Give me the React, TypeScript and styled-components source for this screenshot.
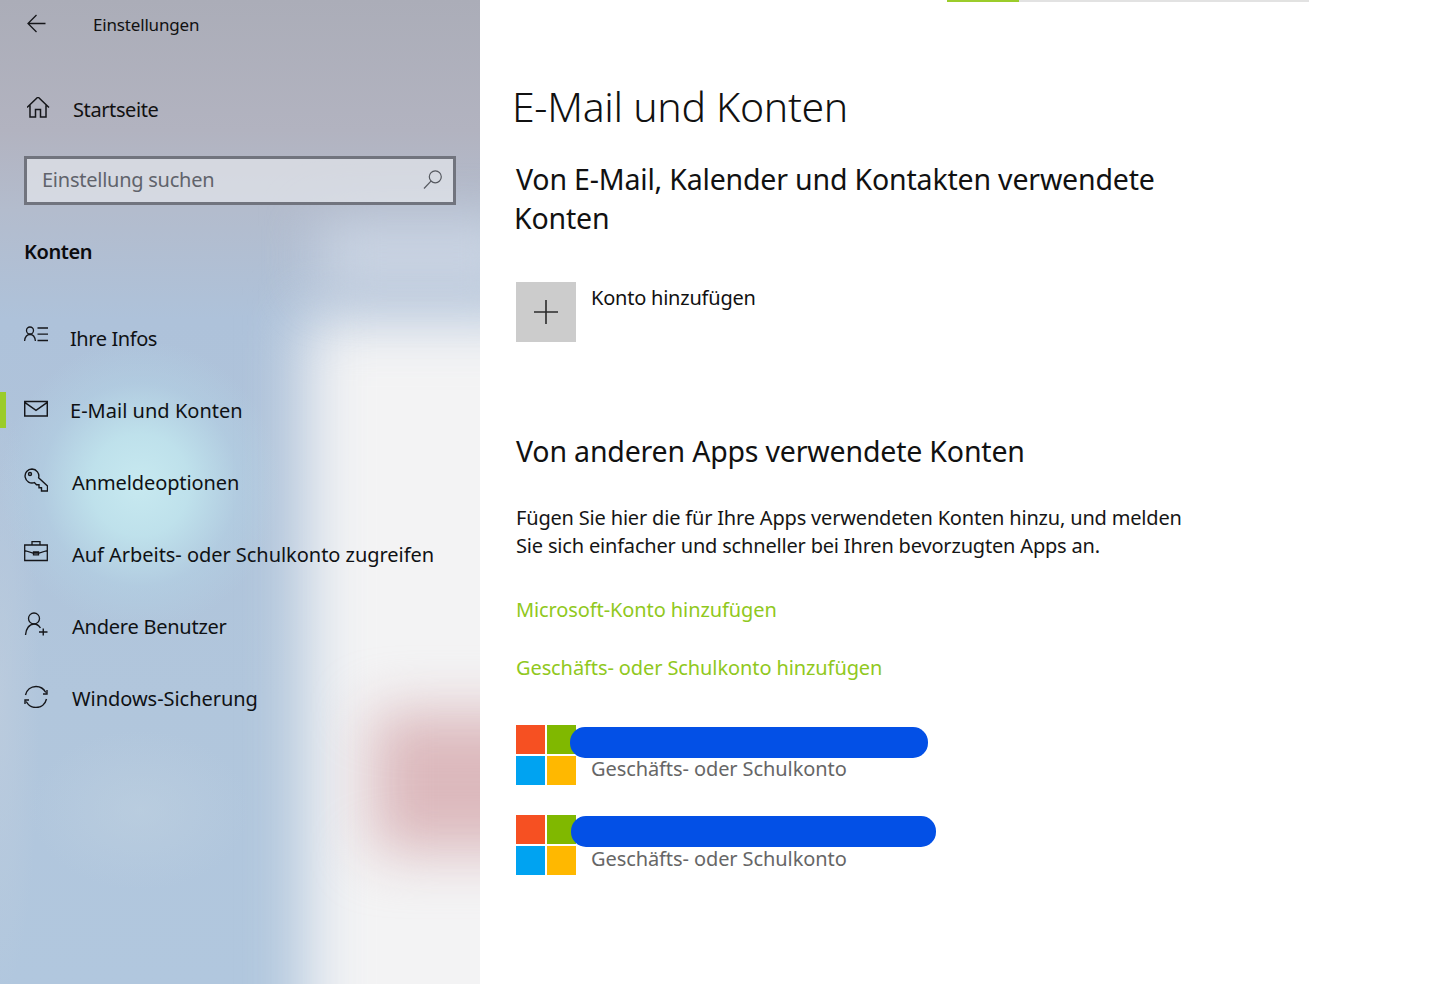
import React from "react";
import styled, { createGlobalStyle } from "styled-components";

const Global = createGlobalStyle`
  html, body { margin: 0; padding: 0; background: #fff; }
  body { font-family: "Noto Sans", "Open Sans", "Liberation Sans", sans-serif; color: #111; }
`;

const Page = styled.div`
  display: flex;
  width: 1455px;
  height: 984px;
  overflow: hidden;
  background: #fff;
`;

const Sidebar = styled.aside`
  position: relative;
  isolation: isolate;
  flex: 0 0 480px;
  height: 984px;
  display: flex;
  flex-direction: column;
  overflow: hidden;
  background:
    radial-gradient(ellipse 110px 80px at 140px 810px, rgba(190,208,224,.6) 0%, rgba(190,208,224,0) 100%),
    radial-gradient(ellipse 140px 145px at 140px 485px, rgba(199,233,240,1) 0%, rgba(192,228,237,.9) 35%, rgba(180,212,230,.45) 70%, rgba(176,205,225,0) 100%),
    radial-gradient(ellipse 40px 300px at 0px 700px, rgba(190,205,222,.7) 0%, rgba(190,205,222,0) 100%),
    linear-gradient(180deg, #abadb8 0, #b2b3c0 130px, #b3bccd 210px, #aec2da 320px, #b1c6dc 700px, #b1c7de 984px);
  &::before {
    content: "";
    position: absolute;
    z-index: -1;
    left: 305px;
    top: 315px;
    width: 260px;
    height: 780px;
    background: #f3f3f4;
    filter: blur(30px);
  }
  &::after {
    content: "";
    position: absolute;
    z-index: -1;
    left: 372px;
    top: 712px;
    width: 190px;
    height: 140px;
    background: #dcb9bd;
    filter: blur(28px);
  }
`;

const SoftPatch = styled.div`
  position: absolute;
  z-index: -1;
  left: 320px;
  top: 225px;
  width: 200px;
  height: 60px;
  background: #cfd8e6;
  filter: blur(28px);
`;

const TopBar = styled.div`
  height: 48px;
  display: flex;
  align-items: center;
  padding-left: 27px;
  font-size: 17px;
`;

const TitleText = styled.span`
  margin-left: 46px;
  letter-spacing: -0.17px;
`;

const HomeRow = styled.div`
  height: 72px;
  margin-top: 25px;
  display: flex;
  align-items: center;
  padding-left: 27px;
  font-size: 20px;
  letter-spacing: -0.4px;
`;

const HomeLabel = styled.span`
  margin-left: 22px;
`;

const SearchBox = styled.div`
  box-sizing: border-box;
  width: 432px;
  height: 49px;
  margin: 11px 0 0 24px;
  border: 3px solid #71747e;
  background: rgba(226,229,234,.72);
  display: flex;
  align-items: center;
  justify-content: space-between;
  padding: 0 10px 3px 15px;
  font-size: 20px;
  letter-spacing: -0.25px;
  color: #60636b;
`;

const GroupTitle = styled.div`
  margin: 32px 0 0 24px;
  height: 30px;
  line-height: 30px;
  font-size: 20px;
  font-weight: 600;
  letter-spacing: -0.4px;
  color: #0c0c0e;
`;

const NavList = styled.nav`
  margin-top: 35px;
  display: flex;
  flex-direction: column;
`;

const NavRow = styled.div<{ $active?: boolean; $gap: number; $ls: number }>`
  position: relative;
  height: 72px;
  display: flex;
  align-items: center;
  padding-left: 24px;
  gap: ${(p) => p.$gap}px;
  font-size: 20px;
  letter-spacing: ${(p) => p.$ls}px;
  color: #0f1114;
  &::before {
    content: "";
    display: ${(p) => (p.$active ? "block" : "none")};
    position: absolute;
    left: 0;
    top: 18px;
    width: 6px;
    height: 36px;
    background: #9bcc2a;
  }
`;

const IconWrap = styled.span`
  display: flex;
  flex: 0 0 24px;
  width: 24px;
  height: 24px;
  margin-top: -4px;
`;

const Main = styled.main`
  position: relative;
  flex: 1;
  padding: 0 0 0 36px;
`;

const Progress = styled.div`
  position: absolute;
  left: 467px;
  top: 0;
  width: 362px;
  height: 2px;
  background: #e2e2e2;
`;

const ProgressFill = styled.div`
  width: 72px;
  height: 100%;
  background: #9bcc2a;
`;

const PageTitle = styled.h1`
  margin: 77px 0 0 -4px;
  height: 58px;
  line-height: 58px;
  font-size: 41px;
  font-weight: 300;
  letter-spacing: -0.31px;
  color: #111;
`;

const SectionTitle = styled.h2<{ $top: number }>`
  margin: ${(p) => p.$top}px 0 0;
  font-size: 28.5px;
  line-height: 39px;
  font-weight: 400;
  letter-spacing: -0.18px;
  color: #111;
`;

const HangingWord = styled.span`
  margin-left: -2px;
`;

const AddRow = styled.div`
  margin-top: 44px;
  display: flex;
  gap: 15px;
`;

const AddTile = styled.div`
  width: 60px;
  height: 60px;
  background: #ccc;
  display: flex;
  align-items: center;
  justify-content: center;
`;

const AddLabel = styled.div`
  font-size: 20px;
  line-height: 32px;
  letter-spacing: -0.22px;
`;

const Para = styled.p`
  margin: 33px 0 0;
  font-size: 20px;
  line-height: 28px;
  letter-spacing: -0.18px;
  color: #151515;
`;

const GreenLink = styled.div<{ $top: number }>`
  margin-top: ${(p) => p.$top}px;
  font-size: 20px;
  line-height: 28px;
  letter-spacing: -0.1px;
  color: #90c820;
`;

const AccountRow = styled.div<{ $top: number }>`
  position: relative;
  margin-top: ${(p) => p.$top}px;
  height: 60px;
  display: flex;
  gap: 15px;
`;

const LogoGrid = styled.div`
  width: 60px;
  height: 60px;
  display: grid;
  grid-template-columns: 29px 29px;
  grid-template-rows: 29px 29px;
  gap: 2px;
`;

const LogoCell = styled.div<{ $c: string }>`
  background: ${(p) => p.$c};
`;

const AccountType = styled.div`
  padding-top: 30px;
  font-size: 20px;
  line-height: 28px;
  letter-spacing: -0.09px;
  color: #666;
`;

const Redaction = styled.div<{ $width: number; $left: number; $top: number }>`
  position: absolute;
  left: ${(p) => p.$left}px;
  top: ${(p) => p.$top}px;
  width: ${(p) => p.$width}px;
  height: 31px;
  border-radius: 15px;
  background: #0350e6;
`;

const s = { fill: "none", stroke: "#15161a", strokeWidth: 1.3 } as const;

const Back = () => (
  <svg width="20" height="20" viewBox="0 0 20 20" {...s}>
    <path d="M18.500 9.500H1M9.500 1 1 9.500 9.500 18" />
  </svg>
);
const Home = () => (
  <svg width="24" height="24" viewBox="1 2 24 24" {...s} strokeWidth={1.5}>
    <path d="M1 12.500 12 2l11 10.500M4 10.200V22h5.500v-7.500h5V22H20V10.200" />
  </svg>
);
const Search = () => (
  <svg width="20" height="20" viewBox="0 0 20 20" fill="none" stroke="#55585f" strokeWidth={1.2}>
    <circle cx="12.300" cy="7.800" r="6" />
    <path d="M8 12.200 1 19.500" />
  </svg>
);
const UserList = () => (
  <svg width="24" height="24" viewBox="0 -3 24 24" {...s}>
    <circle cx="6" cy="3.500" r="3.500" />
    <path d="M.6 14c.4-4 2.600-6.500 5.400-6.500s5 2.500 5.400 6.500M13.500 1H24M13.500 7.200H24M13.500 13.500H24" />
  </svg>
);
const Mail = () => (
  <svg width="24" height="24" viewBox="0 -2 24 24" {...s} strokeWidth={1.5}>
    <path d="M.7 3.500h22.600v14.600H.7zM.7 4.300 12 12.300l11.300-8" />
  </svg>
);
const KeyIcon = () => (
  <svg width="24" height="24" viewBox="0 0 24 24" {...s} strokeWidth={1.4}>
    <path d="M8 1a7 7 0 1 0 2.400 13.600l2.100 2.100h2.500v3h2.500v3.300H23.500v-5L14.600 9.800A7 7 0 0 0 8 1z" />
    <circle cx="6" cy="6" r="1.500" />
  </svg>
);
const Briefcase = () => (
  <svg width="24" height="24" viewBox="0 0 24 24" {...s}>
    <path d="M.7 5h22.600v15.500H.7zM8 5V1.700h8V5M.7 10.500 9 13h6l8.300-2.500M9.500 11.800h5v3h-5z" />
  </svg>
);
const UserAdd = () => (
  <svg width="24" height="24" viewBox="0 0 24 24" {...s}>
    <circle cx="10" cy="6.500" r="5.500" />
    <path d="M1.500 23c.3-6 3.800-11 8.500-11 2.600 0 4.900 1.500 6.400 4M15 20h8.500M19.250 16.500v7" strokeWidth={1.4} />
  </svg>
);
const Sync = () => (
  <svg width="24" height="24" viewBox="0 -1 24 24" {...s} strokeWidth={1.4}>
    <path d="M1.500 10C2.700 5 6.800 1.500 12 1.500c4.200 0 7.800 2.300 9.800 6M23 5v4h-4M22.500 14c-1.200 5-5.300 8.500-10.500 8.500-4.200 0-7.800-2.300-9.800-6M1 19v-4h4" />
  </svg>
);
const Plus = () => (
  <svg width="26" height="26" viewBox="0 0 26 26" stroke="#2b2b2b" strokeWidth={1.6}>
    <path d="M1 13h24M13 1v24" />
  </svg>
);

const Logo = () => (
  <LogoGrid>
    <LogoCell $c="#f65022" />
    <LogoCell $c="#80b800" />
    <LogoCell $c="#00a3f1" />
    <LogoCell $c="#ffb800" />
  </LogoGrid>
);

const items = [
  { label: "Ihre Infos", icon: <UserList />, gap: 22, ls: -0.42 },
  { label: "E-Mail und Konten", icon: <Mail />, gap: 22, ls: 0.02, active: true },
  { label: "Anmeldeoptionen", icon: <KeyIcon />, gap: 24, ls: -0.1 },
  { label: "Auf Arbeits- oder Schulkonto zugreifen", icon: <Briefcase />, gap: 24, ls: -0.04 },
  { label: "Andere Benutzer", icon: <UserAdd />, gap: 24, ls: -0.24 },
  { label: "Windows-Sicherung", icon: <Sync />, gap: 24, ls: -0.04 },
];

export default function App() {
  return (
    <Page>
      <Global />
      <Sidebar>
        <SoftPatch />
        <TopBar>
          <Back />
          <TitleText>Einstellungen</TitleText>
        </TopBar>
        <HomeRow>
          <Home />
          <HomeLabel>Startseite</HomeLabel>
        </HomeRow>
        <SearchBox>
          <span>Einstellung suchen</span>
          <Search />
        </SearchBox>
        <GroupTitle>Konten</GroupTitle>
        <NavList>
          {items.map((i) => (
            <NavRow key={i.label} $active={i.active} $gap={i.gap} $ls={i.ls}>
              <IconWrap>{i.icon}</IconWrap>
              <span>{i.label}</span>
            </NavRow>
          ))}
        </NavList>
      </Sidebar>
      <Main>
        <Progress>
          <ProgressFill />
        </Progress>
        <PageTitle>E-Mail und Konten</PageTitle>
        <SectionTitle $top={25}>
          Von E-Mail, Kalender und Kontakten verwendete
          <br />
          <HangingWord>Konten</HangingWord>
        </SectionTitle>
        <AddRow>
          <AddTile>
            <Plus />
          </AddTile>
          <AddLabel>Konto hinzufügen</AddLabel>
        </AddRow>
        <SectionTitle $top={90}>Von anderen Apps verwendete Konten</SectionTitle>
        <Para>
          Fügen Sie hier die für Ihre Apps verwendeten Konten hinzu, und melden
          <br />
          Sie sich einfacher und schneller bei Ihren bevorzugten Apps an.
        </Para>
        <GreenLink $top={36}>Microsoft-Konto hinzufügen</GreenLink>
        <GreenLink $top={30}>Geschäfts- oder Schulkonto hinzufügen</GreenLink>
        <AccountRow $top={43}>
          <Logo />
          <AccountType>Geschäfts- oder Schulkonto</AccountType>
          <Redaction $left={54} $top={2} $width={358} />
        </AccountRow>
        <AccountRow $top={30}>
          <Logo />
          <AccountType>Geschäfts- oder Schulkonto</AccountType>
          <Redaction $left={55} $top={1} $width={365} />
        </AccountRow>
      </Main>
    </Page>
  );
}
